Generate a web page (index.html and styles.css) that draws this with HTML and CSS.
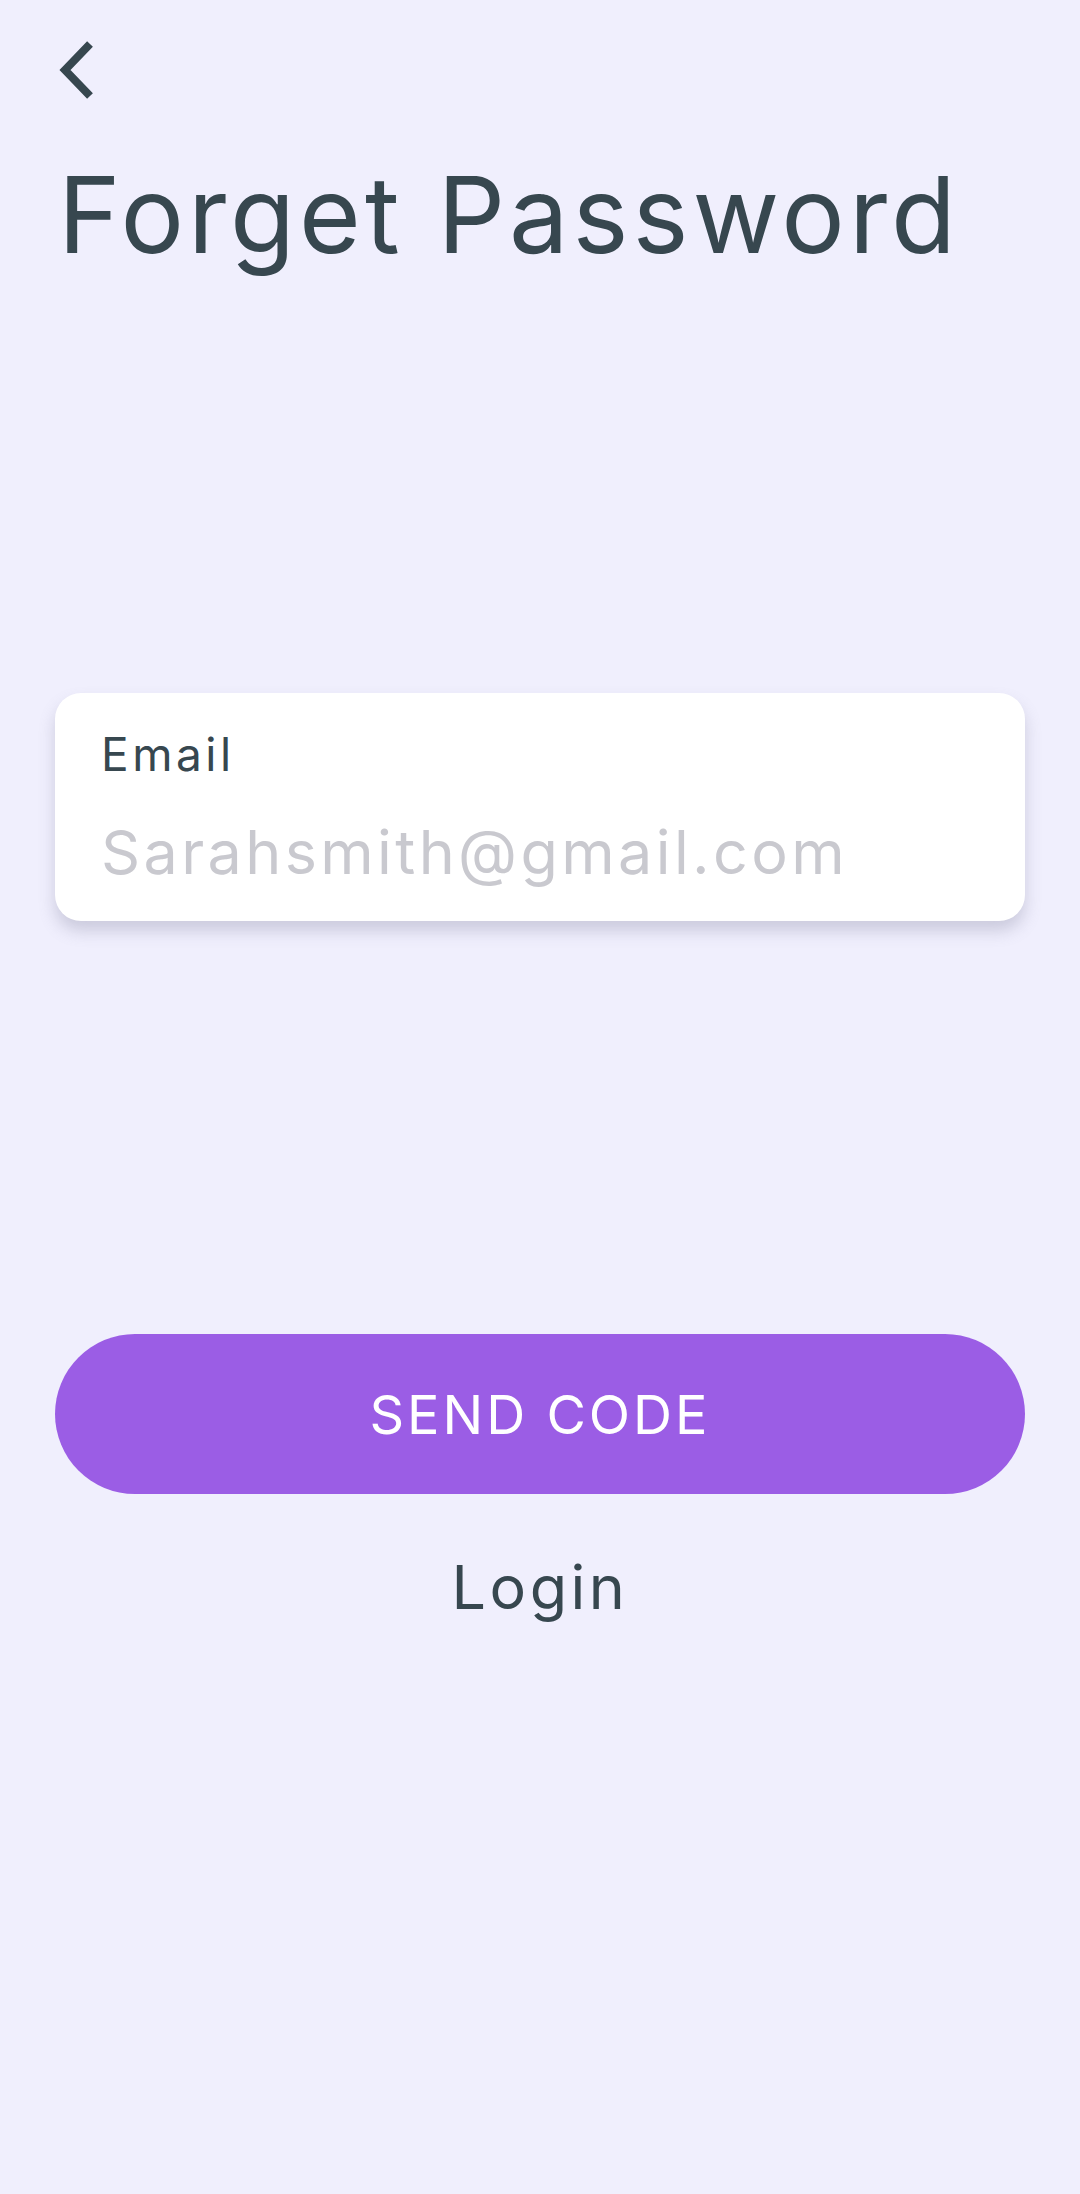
FILE: index.html
```html
<!DOCTYPE html>
<html>
<head>
<meta charset="utf-8">
<link rel="stylesheet" href="styles.css">
</head>
<body>
<div class="screen">
  <div class="topbar">
    <svg class="back" width="44" height="64" viewBox="0 0 44 64">
      <polyline points="34,4 9,30 34,56" fill="none" stroke="#37474f" stroke-width="8" stroke-linecap="butt" stroke-linejoin="miter"/>
    </svg>
  </div>
  <h1 class="title">Forget Password</h1>
  <div class="card">
    <div class="label">Email</div>
    <div class="placeholder">Sarahsmith@gmail.com</div>
  </div>
  <button class="send">SEND CODE</button>
  <div class="login">Login</div>
</div>
</body>
</html>
```
FILE: styles.css
```css
html, body {
  margin: 0;
  padding: 0;
  background: #f0effd;
}
body {
  font-family: Inter, "Noto Sans", sans-serif;
  color: #37474f;
}
.screen {
  width: 1080px;
  height: 2194px;
  padding: 0 55px;
  box-sizing: border-box;
  display: flex;
  flex-direction: column;
}
.topbar {
  height: 110px;
  padding-top: 40px;
  box-sizing: border-box;
}
.back {
  display: block;
  margin-left: 1px;
}
.title {
  margin: 40px 0 0 3px;
  font-weight: 400;
  font-size: 106px;
  line-height: 130px;
  letter-spacing: 4px;
}
.card {
  margin-top: 413px;
  background: #fff;
  border-radius: 26px;
  height: 228px;
  box-shadow: 0 10px 16px rgba(120, 120, 150, 0.3);
  padding: 31px 46px 0;
  box-sizing: border-box;
}
.label {
  font-size: 46px;
  line-height: 60px;
  letter-spacing: 3.5px;
}
.placeholder {
  margin-top: 33px;
  font-size: 61px;
  line-height: 70px;
  letter-spacing: 3.4px;
  color: #c9c9cf;
}
.send {
  margin-top: 413px;
  height: 160px;
  border: none;
  border-radius: 80px;
  background: #9b5de5;
  color: #fff;
  font-family: Inter, "Noto Sans", sans-serif;
  font-size: 54px;
  font-weight: 400;
  letter-spacing: 3px;
  padding: 0;
}
.login {
  margin-top: 58px;
  text-align: center;
  font-size: 61px;
  line-height: 70px;
  letter-spacing: 3.5px;
}
```
